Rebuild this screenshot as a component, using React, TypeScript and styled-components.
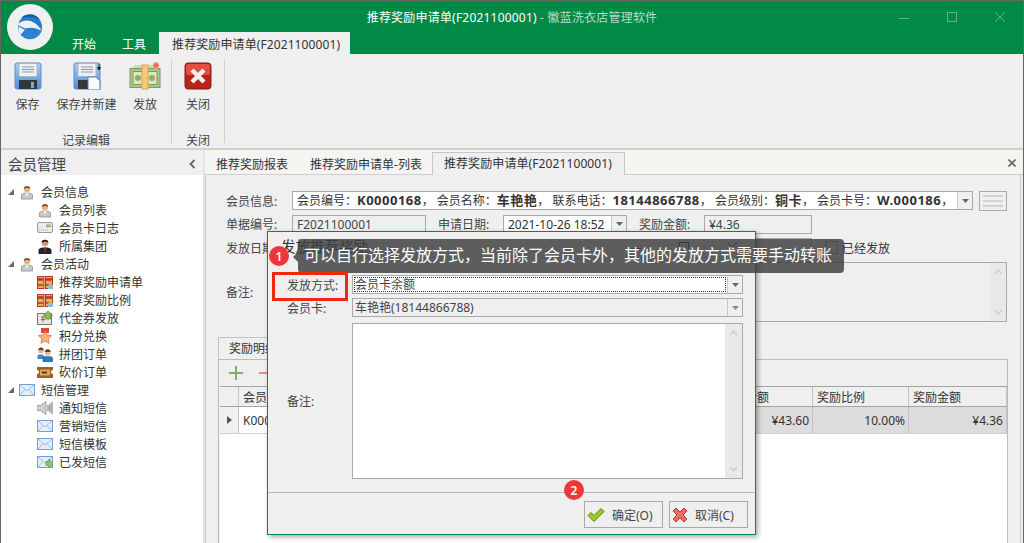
import * as React from "react";
import styled, { createGlobalStyle } from "styled-components";

const GlobalStyle = createGlobalStyle`
  html, body {
    margin: 0;
    padding: 0;
    background: #efefef;
  }
  body {
    font-family: "Noto Sans", "Noto Sans CJK SC", sans-serif;
    font-size: 12px;
    color: #333;
  }
  * {
    box-sizing: border-box;
  }
`;

const SYSTEM_GREEN = "#018a45";
const FIELD_BORDER = "#a9a9a9";

/* ---------- drawn icons ---------- */

function Logo() {
  return (
    <svg width="46" height="46" viewBox="0 0 46 46">
      <circle cx="23" cy="23" r="23" fill="#eff1f1" />
      <circle cx="23" cy="23" r="12" fill="#2a7bcb" />
      <path d="M14 14 A12 12 0 0 1 33 16 C27 12.5 20 12.5 14 14Z" fill="#0f5fa8" />
      <path d="M11 20 C17 14.5 27 14 35.5 27.5 C29 23.5 24 23 18.5 24.5 L11.5 21.5Z" fill="#eff1f1" />
      <path d="M11.5 22.5 L18 26 L13.5 31 A12 12 0 0 1 11.5 22.5Z" fill="#eff1f1" />
      <path d="M13.5 31 L18 26 C24 27 30 28 35 25 A12 12 0 0 1 17 33.5Z" fill="#2f82d2" />
    </svg>
  );
}

function Floppy({ doc }: { doc?: boolean }) {
  const id = doc ? "floppyDoc" : "floppyPlain";
  return (
    <svg width="32" height="28" viewBox="0 0 32 28">
      <defs>
        <linearGradient id={id} x1="0" y1="0" x2="0" y2="1">
          <stop offset="0" stopColor="#a9cdf2" />
          <stop offset="1" stopColor="#4d8ed4" />
        </linearGradient>
      </defs>
      <rect x="3" y="1" width="26" height="26" rx="2" fill={`url(#${id})`} stroke="#5d8cc2" />
      <rect x="7" y="1.5" width="18" height="13" fill="#eef0f3" stroke="#a5b6c9" />
      <path d="M10 5h12M10 7.5h12M10 10h12" stroke="#8b97a5" />
      <rect x="7" y="18" width="18" height="9" fill="#33363b" />
      <rect x="19" y="20" width="3" height="6" fill="#7fa6d6" />
      {doc && (
        <>
          <path d="M17 15 h8 l4 4 v9 h-12Z" fill="#f7f9fd" stroke="#4f81bd" />
          <path d="M28 2v5M26.5 5.5h3L28 8Z" stroke="#222" fill="#222" />
        </>
      )}
    </svg>
  );
}

function Money() {
  return (
    <svg width="32" height="28" viewBox="0 0 32 28">
      <path d="M3 6 L6 3 H28 V7Z" fill="#cfdcae" />
      <rect x="1" y="6.5" width="30" height="19" fill="#a9c887" stroke="#7c9a61" />
      <rect x="4" y="9.5" width="24" height="13" fill="#dbe8bb" stroke="#7c9a61" />
      <circle cx="9" cy="16" r="3" fill="#8dae6c" />
      <circle cx="23" cy="16" r="3" fill="#8dae6c" />
      <rect x="13" y="3" width="6" height="24" fill="#f4c97a" stroke="#e0a552" />
      <circle cx="27" cy="3.5" r="3" fill="#ee6a55" stroke="#f6b3a6" />
    </svg>
  );
}

function CloseRed() {
  return (
    <svg width="28" height="28" viewBox="0 0 28 28">
      <rect x="1" y="1" width="26" height="26" rx="3" fill="#b9231a" stroke="#8a1a12" />
      <rect x="2" y="2" width="24" height="11" rx="2" fill="#df4f44" />
      <path d="M8 8 L20 20 M20 8 L8 20" stroke="#f5f0ec" strokeWidth="4.4" />
    </svg>
  );
}

function Person() {
  return (
    <svg width="16" height="16" viewBox="0 0 16 16">
      <path d="M2.5 15 V11 C3 9.5 5.5 9 8 9 C10.5 9 13 9.5 13.5 11 V15Z" fill="#c9c9c4" stroke="#8d8d88" strokeWidth=".8" />
      <path d="M6.5 9 L8 13 L9.5 9Z" fill="#f8f5ef" />
      <circle cx="8" cy="5" r="3.2" fill="#e4b285" />
      <path d="M4.8 5 C4.6 1.5 11.2 1 11.2 5 C10 3.8 6.5 3.6 4.8 5Z" fill="#7a4522" />
    </svg>
  );
}

function Card() {
  return (
    <svg width="16" height="12" viewBox="0 0 16 12">
      <rect x=".5" y=".5" width="15" height="10" rx="1.5" fill="#ececea" stroke="#9a9a98" />
      <path d="M9 3h5" stroke="#e67c42" />
      <path d="M9 4.5h5" stroke="#65ad5d" />
      <path d="M2 8h9" stroke="#a0a0a0" strokeDasharray="1 1" />
    </svg>
  );
}

function Manager() {
  return (
    <svg width="16" height="16" viewBox="0 0 16 16">
      <path d="M1.5 16 V12 C2 10 5 9.5 8 9.5 C11 9.5 14 10 14.5 12 V16Z" fill="#23242a" />
      <path d="M7 9.5 h2 l-.4 5 h-1.2Z" fill="#a5262b" />
      <circle cx="8" cy="5" r="3.2" fill="#d69a6e" />
      <path d="M4.6 5 C4 .6 12 .6 11.4 5 C10 3.4 6 3.4 4.6 5Z" fill="#221a14" />
    </svg>
  );
}

function Gift() {
  return (
    <svg width="16" height="13" viewBox="0 0 16 13">
      <rect x=".5" y=".5" width="6.5" height="12" fill="#e2b14c" stroke="#b23a2a" />
      <rect x="8.5" y=".5" width="7" height="12" fill="#e2b14c" stroke="#b23a2a" />
      <path d="M1 3.5h5.5M9 3.5h6" stroke="#b9342a" strokeWidth="2.4" />
      <path d="M1 9h5.5M9 9h3" stroke="#b9342a" strokeWidth="1.4" />
      <rect x="11" y="9" width="5" height="4" fill="#8fb9d8" />
    </svg>
  );
}

function Voucher() {
  return (
    <svg width="16" height="14" viewBox="0 0 16 14">
      <rect x=".5" y="2.5" width="14" height="11" fill="#e6e6e4" stroke="#77776f" />
      <path d="M4 6h4M4 8.5h4M6 6v5" stroke="#bb5044" />
      <path d="M11 0 L15.5 4.5 H13.5 V8 H8.5 V4.5 H6.5Z" fill="#86c256" stroke="#4f8a2e" strokeWidth=".7" />
    </svg>
  );
}

function Medal() {
  return (
    <svg width="14" height="16" viewBox="0 0 14 16">
      <path d="M3 0h8v5H3Z" fill="#df4a2f" />
      <path d="M7 3 L9 7 L13.5 7.6 L10.2 10.6 L11 15.4 L7 13 L3 15.4 L3.8 10.6 L.5 7.6 L5 7Z" fill="#f4b27a" stroke="#e0703d" strokeWidth=".8" />
    </svg>
  );
}

function Group() {
  return (
    <svg width="16" height="16" viewBox="0 0 16 16">
      <path d="M.5 13 V9.5 C1 8 6 8 7 9.5 V13Z" fill="#3f87cf" />
      <circle cx="4" cy="4.5" r="2.8" fill="#e4b285" />
      <path d="M1.4 4 C1.4 .6 6.6 .6 6.6 4Z" fill="#6a3a1c" />
      <path d="M6 16 V11.5 C6.5 10 14.5 10 15.5 11.5 V16Z" fill="#2e79c6" stroke="#1f5c9c" strokeWidth=".6" />
      <circle cx="10.7" cy="6.5" r="3" fill="#eab98c" />
      <path d="M7.8 6 C7.8 2.2 13.6 2.2 13.6 6Z" fill="#6a3a1c" />
    </svg>
  );
}

function Ticket() {
  return (
    <svg width="16" height="11" viewBox="0 0 16 11">
      <path d="M0 0h16v3a2 2 0 0 0 0 4v4H0V7a2 2 0 0 0 0-4Z" fill="#a15f24" />
      <rect x="3" y="2.5" width="10" height="6" fill="#d8a868" />
      <path d="M5 4.5l1 2 1-2 1 2 1-2 1 2" stroke="#5d3312" fill="none" />
    </svg>
  );
}

function Mail({ send }: { send?: boolean }) {
  return (
    <svg width="16" height="14" viewBox="0 0 16 14">
      <rect x=".5" y="1.5" width="15" height="11" fill="#e3eefa" stroke="#6ea0d4" />
      <path d="M1 2 L8 8 L15 2 M1 12 L6 6.5 M15 12 L10 6.5" stroke="#9fbedf" fill="none" />
      {send && <path d="M9 6.5h3V4l4 4.5-4 4.5v-2.5H9Z" fill="#9ac958" stroke="#5c8f2c" strokeWidth=".7" />}
    </svg>
  );
}

function Speaker() {
  return (
    <svg width="16" height="14" viewBox="0 0 16 14">
      <path d="M0 4.5h3.5L9 .5v13L3.5 9.5H0Z" fill="#cfcfcd" stroke="#8a8a88" strokeWidth=".7" />
      <path d="M11 4v6M13 2.5v9M15 1v12" stroke="#555" strokeWidth=".9" />
    </svg>
  );
}

function CheckGreen() {
  return (
    <svg width="18" height="16" viewBox="0 0 18 16">
      <path d="M1 8.5 L4 5.5 L7 8.5 L14 1.5 L17 4.5 L7 14.5Z" fill="#9ccb18" stroke="#5d7f10" />
    </svg>
  );
}

function CrossRed() {
  return (
    <svg width="16" height="16" viewBox="0 0 16 16">
      <path d="M1 4 L4 1 L8 5 L12 1 L15 4 L11 8 L15 12 L12 15 L8 11 L4 15 L1 12 L5 8Z" fill="#ee6a62" stroke="#b23a34" />
    </svg>
  );
}

function Caret({ color = "#666" }: { color?: string }) {
  return (
    <svg width="7" height="4" viewBox="0 0 7 4">
      <path d="M0 0h7L3.5 4Z" fill={color} />
    </svg>
  );
}

function ScrollChevron({ down, color }: { down?: boolean; color: string }) {
  return (
    <svg width="9" height="6" viewBox="0 0 9 6">
      <path d={down ? "M1 1 L4.5 4.5 L8 1" : "M1 5 L4.5 1.5 L8 5"} stroke={color} strokeWidth="1.6" fill="none" />
    </svg>
  );
}

/* ---------- shell ---------- */

const Shell = styled.div`
  position: relative;
  width: 1024px;
  height: 543px;
  overflow: hidden;
  display: flex;
  flex-direction: column;
  background: #efefef;
  border: 1px solid #666;
  border-bottom: 0;
`;

const TitleBar = styled.header`
  height: 53px;
  flex: none;
  background: ${SYSTEM_GREEN};
  display: flex;
  flex-direction: column;
`;

const TitleRow = styled.div`
  height: 31px;
  flex: none;
  display: grid;
  grid-template-columns: 1fr auto 1fr;
  align-items: center;
`;

const TitleText = styled.div`
  grid-column: 2;
  color: #fff;
  font-size: 12px;
  letter-spacing: 0.2px;
  white-space: nowrap;
`;

const TitleDim = styled.span`
  color: #b9dcc9;
`;

const WindowButtons = styled.div`
  grid-column: 3;
  justify-self: end;
  display: flex;
  gap: 38px;
  padding-right: 18px;
  align-items: center;
`;

const WinGlyph = styled.svg`
  display: block;
  width: 10px;
  height: 10px;
`;

const LogoSpot = styled.div`
  position: absolute;
  left: 6px;
  top: 3px;
  width: 46px;
  height: 46px;
`;

const RibbonTabs = styled.nav`
  flex: 1;
  display: flex;
  align-items: flex-end;
  padding-left: 71px;
`;

const RibbonTab = styled.div<{ $active?: boolean }>`
  height: 22px;
  line-height: 26px;
  white-space: nowrap;
  letter-spacing: ${(p) => (p.$active ? "0.1px" : "0")};
  color: ${(p) => (p.$active ? "#333" : "#fff")};
  background: ${(p) => (p.$active ? "#efefef" : "transparent")};
  padding: ${(p) => (p.$active ? "0 10px 0 13px" : "0")};
  margin-right: ${(p) => (p.$active ? "0" : "26px")};
  margin-left: ${(p) => (p.$active ? "-13px" : "0")};
`;

const Ribbon = styled.section`
  height: 96px;
  flex: none;
  display: flex;
  padding-top: 6px;
  background: #efefef;
  border-bottom: 2px solid #d0d0d0;
`;

const RibbonGroup = styled.div<{ $width: number }>`
  width: ${(p) => p.$width}px;
  height: 83px;
  display: flex;
  flex-direction: column;
  align-items: center;
  border-right: 1px solid #cfcfcf;
`;

const RibbonButtons = styled.div`
  flex: 1;
  display: flex;
  align-self: stretch;
  justify-content: center;
`;

const RibbonButton = styled.div<{ $width: number }>`
  width: ${(p) => p.$width}px;
  flex: none;
  display: flex;
  flex-direction: column;
  align-items: center;
  gap: 6px;
  white-space: nowrap;
  color: #444;
  line-height: 18px;
`;

const RibbonIcon = styled.div`
  height: 30px;
  padding-top: 2px;
  display: flex;
  align-items: center;
  justify-content: center;
`;

const GroupCaption = styled.div`
  color: #444;
  line-height: 18px;
  margin-bottom: -7px;
`;

const Body = styled.div`
  flex: 1;
  min-height: 0;
  display: flex;
`;

/* ---------- sidebar ---------- */

const Sidebar = styled.aside`
  width: 204px;
  flex: none;
  display: flex;
  flex-direction: column;
  border-right: 2px solid #e4e4e4;
`;

const SidebarHead = styled.div`
  height: 25px;
  flex: none;
  display: flex;
  align-items: center;
  justify-content: space-between;
  padding: 2px 7px 0;
  font-size: 14.5px;
  color: #444;
`;

const Tree = styled.ul`
  flex: 1;
  margin: 0;
  padding: 8px 0 0;
  list-style: none;
  background: #fff;
`;

const TreeRow = styled.li<{ $level: number }>`
  height: 18px;
  display: flex;
  align-items: center;
  padding-left: ${(p) => (p.$level === 0 ? 7 : 36)}px;
  white-space: nowrap;
  color: #333;
`;

const TreeArrow = styled.svg`
  width: 6px;
  height: 6px;
  margin-right: 5px;
  flex: none;
`;

const TreeIcon = styled.span`
  width: 16px;
  height: 16px;
  margin-right: 6px;
  flex: none;
  display: flex;
  align-items: center;
  justify-content: center;
`;

/* ---------- main ---------- */

const Main = styled.main`
  flex: 1;
  min-width: 0;
  display: flex;
  flex-direction: column;
`;

const DocTabs = styled.div`
  height: 25px;
  flex: none;
  display: flex;
  align-items: flex-end;
  background: #f5f4f0;
  position: relative;
  border-bottom: 1px solid #cfcfcf;
  padding-left: 1px;
`;

const DocTab = styled.div<{ $active?: boolean }>`
  height: ${(p) => (p.$active ? "23px" : "21px")};
  line-height: ${(p) => (p.$active ? "22px" : "21px")};
  padding: ${(p) => (p.$active ? "0 12px 0 11px" : "0 10px")};
  margin-left: ${(p) => (p.$active ? "-2px" : "0")};
  margin-right: ${(p) => (p.$active ? "0" : "2px")};
  margin-bottom: -1px;
  letter-spacing: ${(p) => (p.$active ? "0.1px" : "0")};
  white-space: nowrap;
  color: #333;
  background: ${(p) => (p.$active ? "#efefef" : "transparent")};
  border: ${(p) => (p.$active ? "1px solid #c6c6c6" : "0")};
  border-bottom: 0;
`;

const DocClose = styled.svg`
  position: absolute;
  right: 7px;
  top: 9px;
  width: 8px;
  height: 8px;
`;

const Panel = styled.div`
  flex: 1;
  min-height: 0;
  display: flex;
  flex-direction: column;
  margin-right: 2px;
  padding: 16px 13px 0 20px;
  border: 1px solid #cfcfcf;
  border-top: 0;
  border-bottom: 0;
  background: #efefef;
`;

const FormRow = styled.div<{ $gap?: number }>`
  height: 19px;
  flex: none;
  display: flex;
  align-items: center;
  margin-bottom: ${(p) => p.$gap ?? 4.5}px;
`;

const FieldLabel = styled.label<{ $width: number; $left?: number }>`
  width: ${(p) => p.$width}px;
  flex: none;
  margin-left: ${(p) => p.$left ?? 0}px;
  color: #444;
  white-space: nowrap;
`;

const Field = styled.div<{ $width?: number; $white?: boolean }>`
  width: ${(p) => (p.$width ? `${p.$width}px` : "auto")};
  flex: ${(p) => (p.$width ? "none" : "1")};
  min-width: 0;
  height: 19px;
  line-height: 17px;
  padding-left: 4px;
  display: flex;
  align-items: center;
  white-space: nowrap;
  overflow: hidden;
  color: #444;
  background: ${(p) => (p.$white ? "#fff" : "#efefef")};
  border: 1px solid ${FIELD_BORDER};
`;

const FieldText = styled.span`
  flex: 1;
  min-width: 0;
  overflow: hidden;
  color: #333;
`;

const Strong = styled.b`
  font-size: 13px;
  letter-spacing: 0.5px;
`;

const DropButton = styled.span`
  width: 15px;
  height: 100%;
  flex: none;
  display: flex;
  align-items: center;
  justify-content: center;
  background: #efefef;
  border-left: 1px solid #c8c8c8;
`;

const MenuButton = styled.div`
  width: 28px;
  height: 20px;
  margin-left: 6px;
  flex: none;
  display: flex;
  align-items: center;
  justify-content: center;
  border: 1px solid #a9a9a9;
`;

const CheckBox = styled.span`
  width: 13px;
  height: 13px;
  flex: none;
  margin-left: 13px;
  margin-right: 4px;
  border: 1px solid #8a8a8a;
`;

const MemoRow = styled.div`
  height: 60px;
  flex: none;
  display: flex;
  align-items: center;
`;

const MemoBox = styled.div<{ $white?: boolean }>`
  flex: 1;
  align-self: stretch;
  display: flex;
  justify-content: flex-end;
  background: ${(p) => (p.$white ? "#fff" : "#efefef")};
  border: 1px solid ${FIELD_BORDER};
`;

const ScrollBar = styled.div<{ $width: number }>`
  width: ${(p) => p.$width}px;
  flex: none;
  display: flex;
  flex-direction: column;
  align-items: center;
  justify-content: space-between;
  padding: 6px 0;
  background: #e9e9e9;
`;

const DetailWrap = styled.div`
  flex: 1;
  min-height: 0;
  margin: 15px -1px 0 -8px;
  display: flex;
  flex-direction: column;
`;

const DetailTab = styled.div`
  width: 90px;
  height: 23px;
  flex: none;
  padding-left: 10px;
  line-height: 22px;
  color: #333;
  border: 1px solid #c2c2c2;
  border-bottom: 0;
`;

const DetailBox = styled.div`
  flex: 1;
  display: flex;
  flex-direction: column;
  margin-top: -1px;
  padding-left: 1px;
  border: 1px solid #bbb;
  border-bottom: 0;
  background: #efefef;
`;

const DetailTools = styled.div`
  height: 26px;
  flex: none;
  display: flex;
  align-items: center;
  gap: 16px;
  padding-left: 9px;
`;

const GridArea = styled.div`
  flex: 1;
  background: #fff;
`;

const GridRow = styled.div<{ $head?: boolean }>`
  display: grid;
  grid-template-columns: 19px 1fr 96px 96px 98px;
  height: ${(p) => (p.$head ? "21px" : "27px")};
  background: ${(p) => (p.$head ? "#efefef" : "#dcdcdc")};
  border-top: ${(p) => (p.$head ? "1px solid #a5a5a5" : "0")};
  border-bottom: 1px solid ${(p) => (p.$head ? "#a5a5a5" : "#cfcfcf")};
`;

const GridCell = styled.div<{ $end?: boolean; $plain?: boolean }>`
  display: flex;
  align-items: center;
  justify-content: ${(p) => (p.$end ? "flex-end" : "flex-start")};
  padding: 0 3px 0 4px;
  white-space: nowrap;
  overflow: hidden;
  color: #333;
  background: ${(p) => (p.$plain ? "#fff" : "transparent")};
  border-right: 1px solid #c4c4c4;
`;

const RowMarker = styled(GridCell)`
  justify-content: center;
  background: #efefef;
`;

/* ---------- dialog ---------- */

const Dialog = styled.div`
  position: absolute;
  left: 266px;
  top: 230px;
  width: 489px;
  height: 304px;
  display: flex;
  flex-direction: column;
  background: #efefef;
  border: 1px solid ${SYSTEM_GREEN};
  box-shadow: 2px 2px 5px rgba(0, 0, 0, 0.35);
`;

const DialogHead = styled.div`
  height: 43px;
  flex: none;
  display: flex;
  align-items: flex-start;
  justify-content: space-between;
  padding: 3px 18px 0 13px;
  font-size: 14.5px;
  color: #333;
`;

const DialogButtons = styled.div`
  display: flex;
  gap: 38px;
  padding-top: 7px;
`;

const DialogBody = styled.div`
  flex: 1;
  min-height: 0;
  display: flex;
  flex-direction: column;
  gap: 4px;
  padding: 0 12px 13px 19px;
`;

const DialogRow = styled.div<{ $grow?: boolean }>`
  display: flex;
  align-items: center;
  flex: ${(p) => (p.$grow ? "1" : "none")};
  height: ${(p) => (p.$grow ? "auto" : "19px")};
  margin-top: ${(p) => (p.$grow ? "2px" : "0")};
  min-height: 0;
`;

const DialogLabel = styled.span`
  width: 65px;
  flex: none;
  color: #444;
  white-space: nowrap;
`;

const DialogSelect = styled.div<{ $white?: boolean }>`
  flex: 1;
  min-width: 0;
  align-self: stretch;
  display: flex;
  background: ${(p) => (p.$white ? "#fff" : "#efefef")};
  border: 1px solid ${FIELD_BORDER};
`;

const SelectText = styled.span<{ $focus?: boolean }>`
  flex: 1;
  margin: 1px;
  padding-left: 1px;
  line-height: 15px;
  color: #444;
  outline: ${(p) => (p.$focus ? "1px dotted #333" : "0")};
  outline-offset: -1px;
`;

const DialogFoot = styled.div`
  height: 42px;
  flex: none;
  margin-right: 1px;
  display: flex;
  justify-content: flex-end;
  gap: 6px;
  padding: 8px 6px 0 0;
  border-top: 1px solid #b5b5b5;
  border-bottom: 1px solid transparent;
`;

const FootButton = styled.div`
  width: 79px;
  height: 27px;
  display: flex;
  align-items: center;
  gap: 7px;
  padding-left: 2px;
  white-space: nowrap;
  color: #444;
  border: 1px solid ${FIELD_BORDER};
`;

/* ---------- guide overlay ---------- */

const GuideTip = styled.div`
  position: absolute;
  left: 297px;
  top: 238px;
  width: 546px;
  height: 34px;
  padding-left: 6px;
  line-height: 33px;
  font-size: 16px;
  color: #fff;
  white-space: nowrap;
  border-radius: 4px;
  background: rgba(62, 62, 62, 0.83);

  &::before {
    content: "";
    position: absolute;
    left: -5px;
    top: 13px;
    border: 5px solid transparent;
    border-left: 0;
    border-right-color: rgba(62, 62, 62, 0.83);
  }
`;

const GuideFrame = styled.div`
  position: absolute;
  left: 271px;
  top: 271px;
  width: 76px;
  height: 29px;
  border: 3px solid #f0290c;
`;

const GuideBadge = styled.div<{ $x: number; $y: number }>`
  position: absolute;
  left: ${(p) => p.$x}px;
  top: ${(p) => p.$y}px;
  width: 20px;
  height: 20px;
  border-radius: 50%;
  display: flex;
  align-items: center;
  justify-content: center;
  font-size: 12px;
  font-weight: 600;
  color: #fff;
  background: #f2353b;
`;

/* ---------- data ---------- */

type TreeItem = { label: string; level: number; icon: React.ReactNode };

const treeItems: TreeItem[] = [
  { label: "会员信息", level: 0, icon: <Person /> },
  { label: "会员列表", level: 1, icon: <Person /> },
  { label: "会员卡日志", level: 1, icon: <Card /> },
  { label: "所属集团", level: 1, icon: <Manager /> },
  { label: "会员活动", level: 0, icon: <Person /> },
  { label: "推荐奖励申请单", level: 1, icon: <Gift /> },
  { label: "推荐奖励比例", level: 1, icon: <Gift /> },
  { label: "代金券发放", level: 1, icon: <Voucher /> },
  { label: "积分兑换", level: 1, icon: <Medal /> },
  { label: "拼团订单", level: 1, icon: <Group /> },
  { label: "砍价订单", level: 1, icon: <Ticket /> },
  { label: "短信管理", level: 0, icon: <Mail /> },
  { label: "通知短信", level: 1, icon: <Speaker /> },
  { label: "营销短信", level: 1, icon: <Mail /> },
  { label: "短信模板", level: 1, icon: <Mail /> },
  { label: "已发短信", level: 1, icon: <Mail send /> },
];

function WinControls({ color }: { color: string }) {
  return (
    <>
      <WinGlyph viewBox="0 0 10 10">
        <path d="M0 6.5h10" stroke={color} />
      </WinGlyph>
      <WinGlyph viewBox="0 0 10 10">
        <rect x=".5" y=".5" width="9" height="9" fill="none" stroke={color} />
      </WinGlyph>
      <WinGlyph viewBox="0 0 10 10">
        <path d="M0 0 L10 10 M10 0 L0 10" stroke={color} />
      </WinGlyph>
    </>
  );
}

export default function App() {
  return (
    <Shell>
      <GlobalStyle />
      <TitleBar>
        <TitleRow>
          <TitleText>
            推荐奖励申请单(F2021100001) <TitleDim>- 徽蓝洗衣店管理软件</TitleDim>
          </TitleText>
          <WindowButtons>
            <WinControls color="#5fb58a" />
          </WindowButtons>
        </TitleRow>
        <RibbonTabs>
          <RibbonTab>开始</RibbonTab>
          <RibbonTab>工具</RibbonTab>
          <RibbonTab $active>推荐奖励申请单(F2021100001)</RibbonTab>
        </RibbonTabs>
      </TitleBar>
      <LogoSpot>
        <Logo />
      </LogoSpot>

      <Ribbon>
        <RibbonGroup $width={171}>
          <RibbonButtons>
            <RibbonButton $width={54}>
              <RibbonIcon>
                <Floppy />
              </RibbonIcon>
              保存
            </RibbonButton>
            <RibbonButton $width={64}>
              <RibbonIcon>
                <Floppy doc />
              </RibbonIcon>
              保存并新建
            </RibbonButton>
            <RibbonButton $width={53}>
              <RibbonIcon>
                <Money />
              </RibbonIcon>
              发放
            </RibbonButton>
          </RibbonButtons>
          <GroupCaption>记录编辑</GroupCaption>
        </RibbonGroup>
        <RibbonGroup $width={53}>
          <RibbonButtons>
            <RibbonButton $width={52}>
              <RibbonIcon>
                <CloseRed />
              </RibbonIcon>
              关闭
            </RibbonButton>
          </RibbonButtons>
          <GroupCaption>关闭</GroupCaption>
        </RibbonGroup>
      </Ribbon>

      <Body>
        <Sidebar>
          <SidebarHead>
            会员管理
            <svg width="7" height="10" viewBox="0 0 7 10">
              <path d="M5.5 1 L1.5 5 L5.5 9" stroke="#666" strokeWidth="1.8" fill="none" />
            </svg>
          </SidebarHead>
          <Tree>
            {treeItems.map((item) => (
              <TreeRow key={item.label} $level={item.level}>
                {item.level === 0 && (
                  <TreeArrow viewBox="0 0 6 6">
                    <path d="M6 0V6H0Z" fill="#666" />
                  </TreeArrow>
                )}
                <TreeIcon>{item.icon}</TreeIcon>
                {item.label}
              </TreeRow>
            ))}
          </Tree>
        </Sidebar>

        <Main>
          <DocTabs>
            <DocTab>推荐奖励报表</DocTab>
            <DocTab>推荐奖励申请单-列表</DocTab>
            <DocTab $active>推荐奖励申请单(F2021100001)</DocTab>
            <DocClose viewBox="0 0 8 8">
              <path d="M.5 .5 L7.5 7.5 M7.5 .5 L.5 7.5" stroke="#666" strokeWidth="1.6" />
            </DocClose>
          </DocTabs>
          <Panel>
            <FormRow>
              <FieldLabel $width={66}>会员信息:</FieldLabel>
              <Field $white>
                <FieldText>
                  会员编号：<Strong>K0000168</Strong>， 会员名称：<Strong>车艳艳</Strong>， 联系电话：<Strong>18144866788</Strong>， 会员级别：<Strong>铜卡</Strong>， 会员卡号：<Strong>W.000186</Strong>，
                </FieldText>
                <DropButton>
                  <Caret />
                </DropButton>
              </Field>
              <MenuButton>
                <svg width="20" height="14" viewBox="0 0 20 14">
                  <path d="M0 2h20M0 7h20M0 12h20" stroke="#b5b5b5" />
                </svg>
              </MenuButton>
            </FormRow>
            <FormRow>
              <FieldLabel $width={66}>单据编号:</FieldLabel>
              <Field $width={134}>F2021100001</Field>
              <FieldLabel $width={65} $left={12}>
                申请日期:
              </FieldLabel>
              <Field $white $width={124}>
                <FieldText>2021-10-26 18:52</FieldText>
                <DropButton>
                  <Caret />
                </DropButton>
              </Field>
              <FieldLabel $width={65} $left={12}>
                奖励金额:
              </FieldLabel>
              <Field $width={108}>¥4.36</Field>
            </FormRow>
            <FormRow $gap={5}>
              <FieldLabel $width={66}>发放日期:</FieldLabel>
              <Field $width={134} />
              <FieldLabel $width={65} $left={12} />
              <Field $width={124} />
              <FieldLabel $width={65} $left={12} />
              <Field $width={108} />
              <CheckBox />
              已经发放
            </FormRow>
            <MemoRow>
              <FieldLabel $width={66}>备注:</FieldLabel>
              <MemoBox>
                <ScrollBar $width={16}>
                  <ScrollChevron color="#cfcfcf" />
                  <ScrollChevron down color="#cfcfcf" />
                </ScrollBar>
              </MemoBox>
            </MemoRow>

            <DetailWrap>
              <DetailTab>奖励明细</DetailTab>
              <DetailBox>
                <DetailTools>
                  <svg width="14" height="14" viewBox="0 0 14 14">
                    <path d="M7 0v14M0 7h14" stroke="#7fb069" strokeWidth="2" />
                  </svg>
                  <svg width="14" height="14" viewBox="0 0 14 14">
                    <path d="M0 7h14" stroke="#e58c84" strokeWidth="2" />
                  </svg>
                </DetailTools>
                <GridArea>
                  <GridRow $head>
                    <GridCell />
                    <GridCell>会员编号</GridCell>
                    <GridCell>消费金额</GridCell>
                    <GridCell>奖励比例</GridCell>
                    <GridCell>奖励金额</GridCell>
                  </GridRow>
                  <GridRow>
                    <RowMarker>
                      <svg width="5" height="8" viewBox="0 0 5 8">
                        <path d="M0 0 L5 4 L0 8Z" fill="#555" />
                      </svg>
                    </RowMarker>
                    <GridCell $plain>K0000168</GridCell>
                    <GridCell $end>¥43.60</GridCell>
                    <GridCell $end>10.00%</GridCell>
                    <GridCell $end>¥4.36</GridCell>
                  </GridRow>
                </GridArea>
              </DetailBox>
            </DetailWrap>
          </Panel>
        </Main>
      </Body>

      <Dialog>
        <DialogHead>
          发放推荐奖励
          <DialogButtons>
            <WinControls color="#333" />
          </DialogButtons>
        </DialogHead>
        <DialogBody>
          <DialogRow>
            <DialogLabel>发放方式:</DialogLabel>
            <DialogSelect $white>
              <SelectText $focus>会员卡余额</SelectText>
              <DropButton>
                <Caret />
              </DropButton>
            </DialogSelect>
          </DialogRow>
          <DialogRow>
            <DialogLabel>会员卡:</DialogLabel>
            <DialogSelect>
              <SelectText>车艳艳(18144866788)</SelectText>
              <DropButton>
                <Caret color="#888" />
              </DropButton>
            </DialogSelect>
          </DialogRow>
          <DialogRow $grow>
            <DialogLabel>备注:</DialogLabel>
            <MemoBox $white>
              <ScrollBar $width={17}>
                <ScrollChevron color="#cfcfcf" />
                <ScrollChevron down color="#cfcfcf" />
              </ScrollBar>
            </MemoBox>
          </DialogRow>
        </DialogBody>
        <DialogFoot>
          <FootButton>
            <CheckGreen />
            确定(O)
          </FootButton>
          <FootButton>
            <CrossRed />
            取消(C)
          </FootButton>
        </DialogFoot>
      </Dialog>

      <GuideTip>可以自行选择发放方式，当前除了会员卡外，其他的发放方式需要手动转账</GuideTip>
      <GuideFrame />
      <GuideBadge $x={268} $y={245}>1</GuideBadge>
      <GuideBadge $x={563} $y={479}>2</GuideBadge>
    </Shell>
  );
}
